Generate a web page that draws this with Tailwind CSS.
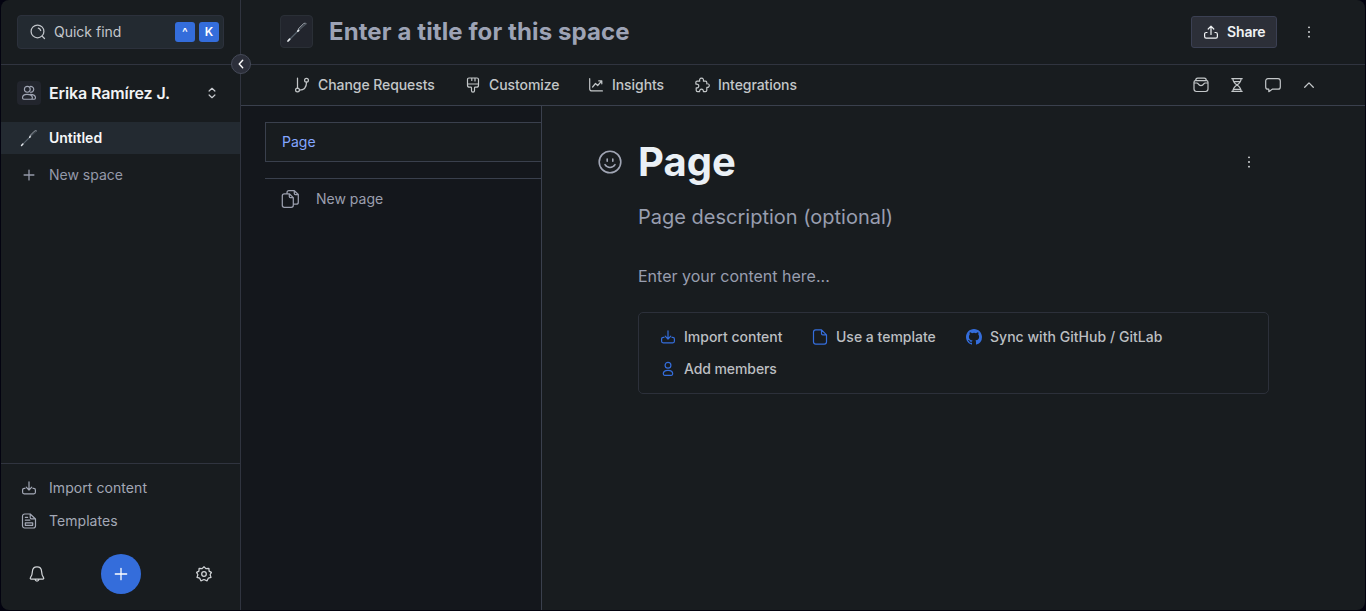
<!DOCTYPE html>
<html lang="en">
<head>
<meta charset="utf-8">
<title>Untitled space</title>
<script src="https://cdn.jsdelivr.net/npm/@tailwindcss/browser@4"></script>
</head>
<body class="h-[611px] w-[1366px] overflow-hidden bg-[#030310] pl-px font-['Inter',sans-serif] text-[15px] leading-5 text-[#c8cacc]">
<svg class="hidden">
  <defs>
    <symbol id="import" viewBox="0 0 16 16"><path d="M8 1.900v8M5.200 7.200L8 10l2.800-2.800M4 8.300h-.7c-1 0-1.700.7-1.700 1.700v2.300c0 .9.600 1.500 1.500 1.500h9.800c.9 0 1.500-.6 1.500-1.500V10c0-1-.7-1.700-1.700-1.700H12"/></symbol>
    <symbol id="pen" viewBox="0 0 24 24">
      <path d="M4 20L13.500 10.500" stroke="#56616b" stroke-width="1.300"/>
      <path d="M3 21l1.700-1.900M12.800 11.200l.9-.9" stroke="#e4e8ec" stroke-width="1.700"/>
      <path d="M13.500 8.800L18.500 3.800c.6-.5 1.500-.8 2.500-.3" stroke="#b4bbc3" stroke-width="1"/>
      <path d="M14.500 9.600L20.700 4" stroke="#4c555e" stroke-width="1.200"/>
      <path d="M12.600 10.200l1-1" stroke="#b4bbc3" stroke-width="1"/>
    </symbol>
  </defs>
</svg>
<div class="flex h-[610px] w-[1364px] overflow-hidden rounded-lg bg-[#181c1f]">
  <aside class="relative flex w-60 shrink-0 flex-col border-r border-[#30343f]">
    <div class="h-[65px] border-b border-[#30343f] pt-[15px] pl-4">
      <div class="flex h-[34px] w-[207px] items-center rounded border border-[#2c313c] bg-[#232a31] pr-1 pl-3">
        <svg class="size-4" viewBox="0 0 16 16" fill="none" stroke="#c0c4c9" stroke-width="1.250" stroke-linecap="round"><circle cx="7.500" cy="7.400" r="6.400"/><path d="M12.200 12.200l2.300 2.300M8.300 4.200a3.300 3.300 0 0 1 2.400 2.300"/></svg>
        <span class="ml-2 text-sm text-[#c3c7cc]">Quick find</span>
        <span class="ml-auto grid size-5 place-items-center rounded-[3px] bg-[#346ddb] text-xs font-semibold text-white">^</span>
        <span class="ml-1 grid size-5 place-items-center rounded-[3px] bg-[#346ddb] text-xs font-semibold text-white">K</span>
      </div>
    </div>
    <div class="absolute top-[54px] left-[230px] z-10 grid size-5 place-items-center rounded-full border border-[#454a58] bg-[#2c2f3a]">
      <svg class="size-3" viewBox="0 0 12 12" fill="none" stroke="#fff" stroke-width="1.400" stroke-linecap="round" stroke-linejoin="round"><path d="M7.700 2.300L4.200 6l3.500 3.700"/></svg>
    </div>
    <div class="flex h-[57px] items-center pb-px pl-4">
      <div class="grid size-6 place-items-center rounded bg-[#22252d]">
        <svg class="size-4" viewBox="0 0 16 16" fill="none" stroke="#a0a5b4" stroke-width="1.150" stroke-linejoin="round"><circle cx="6.300" cy="4.300" r="2.900"/><path d="M8.800 1.600a2.900 2.900 0 1 1 0 5.400M6 9.300c-2.800 0-4.500 1.500-4.500 3.500 0 1 .4 1.400 1.200 1.400h7.500c.8 0 1.200-.4 1.200-1.400 0-2-2.300-3.500-5.400-3.500zM9 9.300c3.300 0 5.500 1.500 5.500 3.500 0 1-.4 1.400-1.200 1.400h-3.500"/></svg>
      </div>
      <span class="ml-2 text-base font-semibold tracking-[-0.12px] text-[#f1f3f5]">Erika Ramírez J.</span>
      <svg class="mr-[22px] ml-auto h-[14px] w-3" viewBox="0 0 12 14" fill="none" stroke="#c6c9cd" stroke-width="1.200" stroke-linecap="round" stroke-linejoin="round"><path d="M3.100 5L6 2.300 8.900 5M3.100 9L6 11.700 8.900 9"/></svg>
    </div>
    <div class="flex h-8 items-center bg-[#232a31] pl-[18px]">
      <svg class="size-5" fill="none" stroke-linecap="round"><use href="#pen"/></svg>
      <span class="ml-2.5 text-sm font-semibold text-[#f6f7f8]">Untitled</span>
    </div>
    <div class="mt-[5px] flex h-8 items-center pl-5 text-[#9499a9]">
      <svg class="size-4" viewBox="0 0 16 16" fill="none" stroke="currentColor" stroke-width="1.300" stroke-linecap="round"><path d="M8 3.100v9.800M3.100 8h9.800"/></svg>
      <span class="ml-3 text-sm">New space</span>
    </div>
    <div class="mt-auto h-[147px] border-t border-[#30343f] pt-[7px] text-sm text-[#a3a8b6]">
      <div class="flex h-[33px] items-center pl-5">
        <svg class="size-4" fill="none" stroke="currentColor" stroke-width="1.200" stroke-linecap="round" stroke-linejoin="round"><use href="#import"/></svg>
        <span class="ml-3 tracking-[0.07px]">Import content</span>
      </div>
      <div class="flex h-[33px] items-center pl-5">
        <svg class="size-4" viewBox="0 0 16 16" fill="none" stroke="currentColor" stroke-width="1.200" stroke-linecap="round" stroke-linejoin="round"><path d="M3.700 1h5.500l5.300 5v6.800c0 1.300-.9 2.200-2.200 2.200H3.700a2.200 2.200 0 0 1-2.200-2.200V3.200C1.500 1.900 2.400 1 3.700 1zM9.200 1v3.500c0 .9.400 1.400 1.300 1.400h4M4.300 4.300h2.400M4.300 7.200h4.500M4.300 9.800h7.400v2.500H4.300z"/></svg>
        <span class="ml-3 tracking-[0.05px]">Templates</span>
      </div>
      <div class="mt-[17px] flex h-10 items-center justify-between pr-7 pl-7 text-[#d0d3d6]">
        <svg class="size-4" viewBox="0 0 16 16" fill="none" stroke="currentColor" stroke-width="1.250" stroke-linecap="round" stroke-linejoin="round"><path d="M8 .9c-2.900 0-4.500 2.100-4.600 4.700-.1 3-.8 4.500-1.900 5.900-.6.800-.2 1.600.7 1.600h11.600c.9 0 1.300-.8.700-1.600-1.100-1.400-1.800-2.900-1.900-5.900C12.500 3 10.900.9 8 .9zM6 13.300c.3 1.100 1 1.700 2 1.700s1.700-.6 2-1.700"/></svg>
        <div class="grid size-10 place-items-center rounded-full bg-[#346ddb]">
          <svg class="size-4" viewBox="0 0 16 16" fill="none" stroke="#fff" stroke-width="1.300" stroke-linecap="round"><path d="M8 2.300v11.400M2.300 8h11.400"/></svg>
        </div>
        <svg class="size-4" viewBox="0 0 16 16" fill="none" stroke="currentColor" stroke-width="1.250" stroke-linejoin="round"><circle cx="8" cy="8" r="2.300"/><path d="M8 .8L9.900 2.600l3-.3.200 2.800 2.300 1.300L14.100 8.700l.9 2.700-2.700.8-1.200 2.600L8 13.500l-3.100 1.300-1.200-2.600L1 11.400l.9-2.700L.6 6.400l2.300-1.300.2-2.800 3 .3z"/></svg>
      </div>
    </div>
  </aside>

  <div class="flex min-w-0 grow flex-col">
    <header class="flex h-[65px] items-center border-b border-[#30343f] pr-12 pl-[39px]">
      <div class="mb-px grid size-[33px] place-items-center rounded border border-[#2a2f36] bg-[#22252d]">
        <svg class="size-6" fill="none" stroke-linecap="round"><use href="#pen"/></svg>
      </div>
      <h1 class="mb-px ml-4 text-2xl font-bold tracking-[0.1px] text-[#9da3b5]">Enter a title for this space</h1>
      <button class="mb-px ml-auto flex h-8 w-[86px] items-center rounded-[3px] border border-[#3b4053] bg-[#2c2f38] pl-[11px] text-sm font-semibold tracking-[-0.15px] text-[#f1f3f5]">
        <svg class="mr-2 size-4" viewBox="0 0 16 16" fill="none" stroke="currentColor" stroke-width="1.200" stroke-linecap="round" stroke-linejoin="round"><path d="M8 10.500V2.300M5.200 5L8 2.200 10.800 5M4 8.500h-.7c-1 0-1.700.7-1.700 1.700v2.300c0 1 .6 1.600 1.500 1.600h9.800c.9 0 1.500-.6 1.500-1.600v-2.300c0-1-.7-1.700-1.700-1.700H12"/></svg>Share
      </button>
      <svg class="mb-px ml-6 size-4" viewBox="0 0 16 16" fill="#e2e4e6"><circle cx="8" cy="3.300" r=".9"/><circle cx="8" cy="8" r=".9"/><circle cx="8" cy="12.700" r=".9"/></svg>
    </header>
    <nav class="flex h-[41px] items-center border-b border-[#3a404d] pr-12 pl-[53px] text-sm font-medium tracking-[-0.07px] text-[#c3c7c9]">
      <div class="flex w-[171px] items-center gap-2">
        <svg class="size-4" viewBox="0 0 16 16" fill="none" stroke="currentColor" stroke-width="1.250" stroke-linecap="round"><circle cx="3.500" cy="13" r="1.900"/><circle cx="12.500" cy="3.300" r="1.900"/><path d="M3.500 1.200v9.900M12.500 5.200c0 5.300-1.800 7.800-7.100 7.800"/></svg>Change Requests
      </div>
      <div class="flex w-[123px] items-center gap-2">
        <svg class="size-4" viewBox="0 0 16 16" fill="none" stroke="currentColor" stroke-width="1.200" stroke-linecap="round" stroke-linejoin="round"><path d="M4 1h8c1 0 1.500.6 1.500 1.500v5.700c0 1.300-.8 2-2 2h-1.200c-.6 0-.8.3-.8.8v2.700c0 .9-.6 1.400-1.500 1.400s-1.500-.5-1.500-1.400V11c0-.5-.2-.8-.8-.8H4.500c-1.200 0-2-.7-2-2V2.500C2.500 1.600 3 1 4 1zM2.500 7h11M6.800 1v2.500M10 1v3"/></svg>Customize
      </div>
      <div class="flex w-[106px] items-center gap-2">
        <svg class="size-4" viewBox="0 0 16 16" fill="none" stroke="currentColor" stroke-width="1.200" stroke-linecap="round" stroke-linejoin="round"><path d="M1.700 1.700v10c0 1.300.8 2.200 2.200 2.200h10.500M4.600 10l2.900-3.500 2.200 2 4-4.600M10.700 3.800h3.100v3"/></svg>Insights
      </div>
      <div class="flex items-center gap-2">
        <svg class="size-4" viewBox="0 0 16 16" fill="none" stroke="currentColor" stroke-width="1.200" stroke-linejoin="round"><path d="M5.700 4.200C5.200 2.400 6 1.200 7.500 1.200s2.400 1.200 1.900 3h2.100c.9 0 1.300.5 1.300 1.300v1.300c1.500-.2 2.500.5 2.500 1.700s-1 2.200-2.500 1.900v2.800c0 .9-.5 1.400-1.300 1.400H9.400c.1-1.500-.6-2.400-1.900-2.400s-2 .9-1.900 2.400H3.500c-.9 0-1.300-.5-1.300-1.400v-2.300c1.800.1 2.600-.7 2.600-1.900S3.800 7 2 7.200l-.2-1.600c0-.9.500-1.400 1.400-1.400z"/></svg>Integrations
      </div>
      <div class="ml-auto flex gap-5">
        <svg class="size-4" viewBox="0 0 16 16" fill="none" stroke="currentColor" stroke-width="1.200" stroke-linecap="round" stroke-linejoin="round"><path d="M2.700 3.700c0-1.500.8-2.500 2-2.500h6.600c1.200 0 2 1 2 2.500M2.500 3.700h11c1 0 1.500.7 1.500 1.600v6.800c0 1.500-.9 2.400-2.400 2.400H3.400c-1.500 0-2.400-.9-2.400-2.400V5.300c0-.9.500-1.600 1.500-1.600zM1.200 6h2.700c.5 0 .8.200 1.100.7.800 1.200 1.700 1.900 3 1.900s2.200-.7 3-1.900c.3-.5.600-.7 1.100-.7h2.700"/></svg>
        <svg class="size-4" viewBox="0 0 16 16" fill="none" stroke="currentColor" stroke-width="1.200" stroke-linecap="round" stroke-linejoin="round"><path d="M2.800 1.700h10.400M2.800 14.300h10.400M3.900 1.700c0 3 1.500 4.500 4.100 6.300-2.600 1.800-4.100 3.300-4.100 6.300M12.100 1.700c0 3-1.500 4.500-4.100 6.300 2.600 1.800 4.100 3.300 4.100 6.300M5 4.700h6M5 12.400h6"/></svg>
        <svg class="size-4" viewBox="0 0 16 16" fill="none" stroke="currentColor" stroke-width="1.200" stroke-linejoin="round"><path d="M3 1.700h10c1.400 0 2.300.9 2.300 2.300v5.900c0 1.400-.9 2.300-2.300 2.300H7.300l-3.500 2.500v-2.500H3c-1.400 0-2.300-.9-2.300-2.300V4c0-1.400.9-2.300 2.300-2.300z"/></svg>
        <svg class="size-4" viewBox="0 0 16 16" fill="none" stroke="currentColor" stroke-width="1.300" stroke-linecap="round" stroke-linejoin="round"><path d="M3.700 10.200L8 5.900l4.300 4.300"/></svg>
      </div>
    </nav>
    <div class="flex min-h-0 grow">
      <section class="w-[301px] shrink-0 border-r border-[#3a404d] bg-[#14171c] pt-4 pl-6 text-sm">
        <div class="flex h-10 items-center border-y border-l border-[#3a404d] bg-[#181c1f] pl-4 text-[#84a7ff]">Page</div>
        <div class="mt-4 flex h-[41px] items-center border-t border-[#3a404d] pl-4 text-[#9b9fae]">
          <svg class="h-5 w-5" viewBox="0 0 20 20" fill="none" stroke="currentColor" stroke-width="1.250" stroke-linejoin="round"><path d="M3.300 4.800h5l4 3.800v7.700c0 1.200-.8 2-2 2h-7c-1.200 0-2-.8-2-2V6.800c0-1.200.8-2 2-2zM8.300 4.800v2.800c0 .7.400 1 1 1h3M6 4.600V3.700c0-1.200.8-2 2-2h5.300l4 3.800v7.700c0 1.200-.8 2-2 2h-2.800M13.300 1.800v2.800c0 .7.300 1 1 1h3"/></svg>
          <span class="ml-[15px]">New page</span>
        </div>
      </section>
      <main class="grow pl-14">
        <div class="flex h-28 items-center pr-[108px]">
          <svg class="size-6" viewBox="0 0 24 24" fill="none" stroke="#a0a5b4" stroke-width="1.600" stroke-linecap="round"><circle cx="12" cy="12" r="10.800"/><path d="M9.200 9v2.200M14.800 9v2.200M7 14.700c2.300 3.700 7.700 3.700 10 0"/></svg>
          <h2 class="ml-4 text-[40px] leading-[48px] font-bold text-[#eaf0f5]">Page</h2>
          <svg class="ml-auto size-4" viewBox="0 0 16 16" fill="#e2e4e6"><circle cx="8" cy="3.300" r=".9"/><circle cx="8" cy="8" r=".9"/><circle cx="8" cy="12.700" r=".9"/></svg>
        </div>
        <div class="-mt-[15px] ml-10 w-[631px]">
          <p class="text-xl leading-7 text-[#989eaf]">Page description (optional)</p>
          <p class="mt-[33px] text-base leading-6 text-[#989eaf]">Enter your content here...</p>
          <div class="mt-6 flex h-[82px] flex-wrap content-start rounded-[5px] border border-[#2c303a] px-[21px] pt-2 text-sm font-medium text-[#bcbfc2]">
            <div class="flex h-8 w-[152px] items-center gap-2"><svg class="size-4" fill="none" stroke="#346ddb" stroke-width="1.200" stroke-linecap="round" stroke-linejoin="round"><use href="#import"/></svg><span>Import content</span></div>
            <div class="flex h-8 w-[154px] items-center gap-2"><svg class="size-4" viewBox="0 0 16 16" fill="none" stroke="#346ddb" stroke-width="1.200" stroke-linejoin="round"><path d="M3.700.8h5.800l5 5v7c0 1.400-.9 2.300-2.200 2.300H3.700c-1.300 0-2.200-.9-2.200-2.300V3.100C1.500 1.700 2.400.8 3.700.8zM9.500.8v3.700c0 .9.400 1.300 1.300 1.300h3.700"/></svg>Use a template</div>
            <div class="flex h-8 items-center gap-2"><svg class="size-4" viewBox="0 0 16 16" fill="#346ddb"><path d="M8 0C3.580 0 0 3.580 0 8c0 3.540 2.290 6.530 5.470 7.590.4.070.55-.17.55-.38 0-.19-.01-.82-.01-1.490-2.010.37-2.530-.49-2.690-.94-.09-.23-.48-.94-.82-1.130-.28-.15-.68-.52-.01-.53.63-.01 1.080.58 1.230.82.72 1.210 1.870.87 2.330.66.07-.52.28-.87.51-1.070-1.780-.2-3.640-.89-3.640-3.950 0-.87.31-1.590.82-2.150-.08-.2-.36-1.020.08-2.120 0 0 .67-.21 2.200.82a7.600 7.600 0 0 1 4 0c1.530-1.040 2.200-.82 2.200-.82.44 1.100.16 1.920.08 2.120.51.56.82 1.270.82 2.150 0 3.070-1.870 3.750-3.650 3.950.29.25.54.73.54 1.480 0 1.070-.01 1.930-.01 2.200 0 .21.15.46.55.38A8.010 8.010 0 0 0 16 8c0-4.420-3.580-8-8-8z"/></svg><span class="tracking-[0.03px]">Sync with GitHub / GitLab</span></div>
            <div class="flex h-8 w-full items-center gap-2"><svg class="size-4" viewBox="0 0 16 16" fill="none" stroke="#346ddb" stroke-width="1.200"><circle cx="8" cy="4.300" r="2.900"/><path d="M8 9.300c-2.900 0-4.700 1.500-4.700 3.500 0 1 .4 1.500 1.300 1.500h6.800c.9 0 1.300-.5 1.300-1.500 0-2-1.800-3.500-4.700-3.500z"/></svg><span class="tracking-[-0.09px]">Add members</span></div>
          </div>
        </div>
      </main>
    </div>
  </div>
</div>
</body>
</html>
